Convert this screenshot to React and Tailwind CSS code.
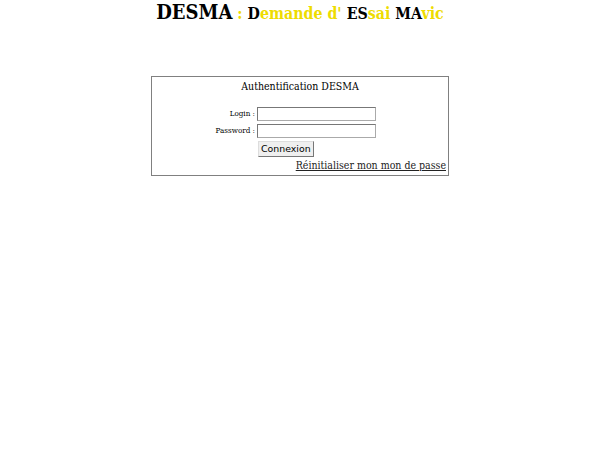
export default function App() {
  const y = "text-[#eedc00]";
  const serif = "font-['DejaVu_Serif_Condensed','DejaVu_Serif',serif] font-stretch-semi-condensed";
  return (
    <div className={`w-[600px] h-[450px] bg-white text-black ${serif}`}>
      <div className="flex justify-center items-baseline h-[24px] pt-[1px] leading-[22px] font-bold whitespace-pre">
        <span className="text-[20px]">DESMA</span>
        <span className="text-[15.8px]">
          <span className={y}> : </span>D<span className={y}>emande d'</span> ES<span className={y}>sai</span> MA<span className={y}>vic</span>
        </span>
      </div>
      <div className="mt-[52px] mx-auto w-[298px] border border-[#808080] flex flex-col items-center pt-[2px] pb-[2px]">
        <div className="text-[10.5px] leading-[14px]">Authentification DESMA</div>
        <div className="mt-[14px] flex flex-col gap-[3px] w-full">
          <div className="flex items-center h-[14px]">
            <div className="w-[105px] text-right text-[8px] pr-[2px]">Login :</div>
            <input className="w-[119px] h-[14px] border border-[#aaa] border-t-[#777] border-l-[#777] bg-white" />
          </div>
          <div className="flex items-center h-[14px]">
            <div className="w-[105px] text-right text-[8px] pr-[2px]">Password :</div>
            <input type="password" className="w-[119px] h-[14px] border border-[#aaa] border-t-[#777] border-l-[#777] bg-white" />
          </div>
        </div>
        <div className="w-full flex pl-[106px] mt-[3px]">
          <button className="h-[16px] px-[2px] text-[9.4px] leading-[12px] font-['DejaVu_Sans',sans-serif] font-stretch-normal bg-[#efefef] border border-[#777] border-t-[#ddd] border-l-[#ddd]">Connexion</button>
        </div>
        <div className="w-full text-right pr-[2px] text-[10.5px] leading-[16px]">
          <a className="underline text-[#222]" href="#">Réinitialiser mon mon de passe</a>
        </div>
      </div>
    </div>
  );
}
